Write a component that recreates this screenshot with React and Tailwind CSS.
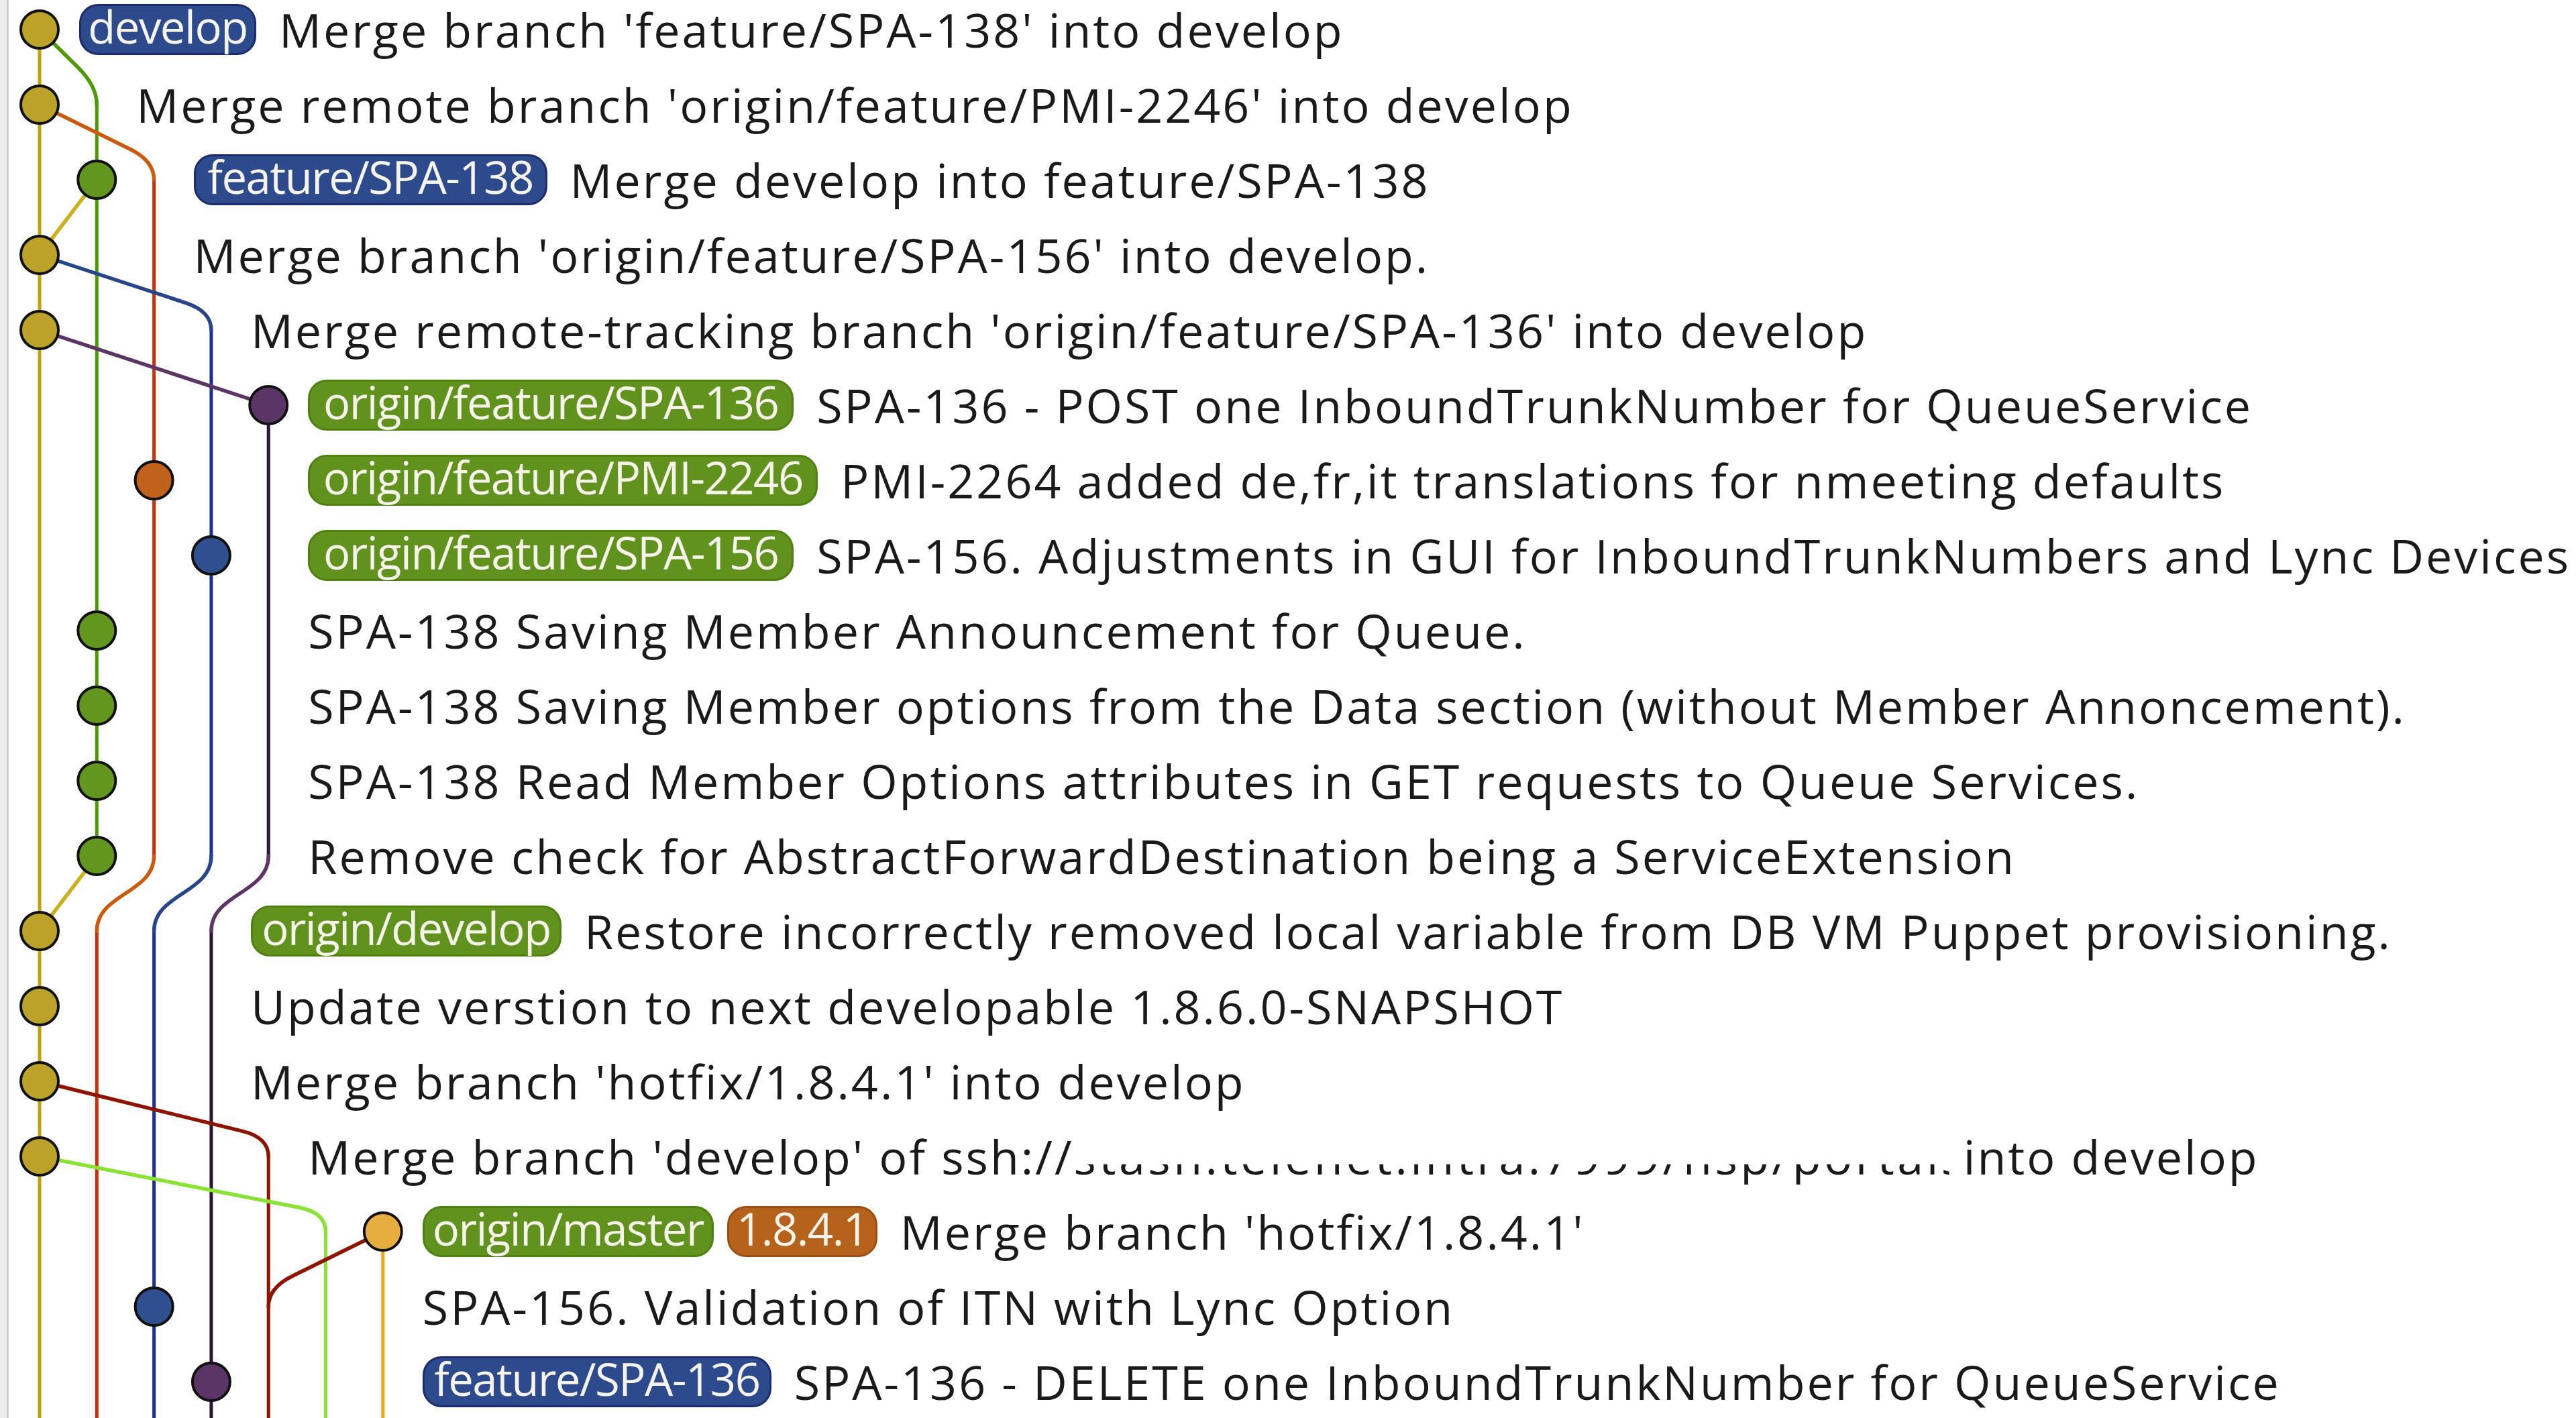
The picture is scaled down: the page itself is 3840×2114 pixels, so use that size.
import React from 'react'

// ── Graph geometry ───────────────────────────────────────────────────────────
const LANE = 85.3
const ROW = 112
const X = (k) => 46 + LANE * k
const Y = (i) => 44 + ROW * i
const BOTTOM = 2140

const C = {
  mustard: '#bf9f0a',
  mustardDot: '#bba229',
  merge: '#cbb020',
  green: '#4e9a06',
  greenDot: '#63961f',
  red: '#c6330a',
  orange: '#cc5a0c',
  orangeDot: '#c0621c',
  navy: '#1f2f8c',
  blue: '#26468a',
  blueDot: '#2f4f8f',
  plumDark: '#2b1838',
  plum: '#5c3566',
  plumDot: '#5b3466',
  maroon: '#8f1400',
  lime: '#8ae234',
  amber: '#f0a51a',
  amberDot: '#e8ad3f',
}

const vline = (k, a, b) => `M ${X(k)} ${a} L ${X(k)} ${b}`
// lane moves sideways between two rows, no commit on either end
const shift = (k1, k2, i) =>
  `M ${X(k1)} ${Y(i)} C ${X(k1)} ${Y(i) + 56} ${X(k2)} ${Y(i) + 56} ${X(k2)} ${Y(i + 1)}`
// from a commit dot out to a lane on the next row
const fork = (k1, i, k2) => {
  const x1 = X(k1), y1 = Y(i), x2 = X(k2), y2 = Y(i + 1)
  const yc = y2 - 28
  const dx = x2 - x1, dy = yc - y1
  const len = Math.hypot(dx, dy)
  const px = x2 - (dx * 40) / len
  const py = yc - (dy * 40) / len
  return `M ${x1} ${y1} L ${px} ${py} Q ${x2} ${yc} ${x2} ${y2}`
}
const straight = (k1, i1, k2, i2) => `M ${X(k1)} ${Y(i1)} L ${X(k2)} ${Y(i2)}`

const verticals = [
  [vline(0, Y(0), BOTTOM), C.mustard],
  [vline(1, Y(1), Y(11)), C.green],
  [vline(2, Y(2), Y(11)), C.red],
  [vline(1, Y(12), BOTTOM), C.red],
  [vline(3, Y(4), Y(11)), C.navy],
  [vline(2, Y(12), BOTTOM), C.navy],
  [vline(4, Y(5), Y(11)), C.plumDark],
  [vline(3, Y(12), BOTTOM), C.plumDark],
  [vline(4, Y(15), BOTTOM), C.maroon],
  [vline(5, Y(16), BOTTOM), C.lime],
  [vline(6, Y(16), BOTTOM), C.amber],
]

const curves = [
  [fork(0, 0, 1), C.green],
  [straight(1, 2, 0, 3), C.merge],
  [fork(0, 1, 2), C.orange],
  [fork(0, 3, 3), C.blue],
  [straight(0, 4, 4, 5), C.plum],
  [shift(2, 1, 11), C.orange],
  [shift(3, 2, 11), C.blue],
  [shift(4, 3, 11), C.plum],
  [straight(1, 11, 0, 12), C.merge],
  [fork(0, 14, 4), C.maroon],
  [fork(0, 15, 5), C.lime],
  [fork(6, 16, 4), C.maroon],
]

const dots = [
  [0, 0, C.mustardDot],
  [0, 1, C.mustardDot],
  [1, 2, C.greenDot],
  [0, 3, C.mustardDot],
  [0, 4, C.mustardDot],
  [4, 5, C.plumDot],
  [2, 6, C.orangeDot],
  [3, 7, C.blueDot],
  [1, 8, C.greenDot],
  [1, 9, C.greenDot],
  [1, 10, C.greenDot],
  [1, 11, C.greenDot],
  [0, 12, C.mustardDot],
  [0, 13, C.mustardDot],
  [0, 14, C.mustardDot],
  [0, 15, C.mustardDot],
  [6, 16, C.amberDot],
  [2, 17, C.blueDot],
  [3, 18, C.plumDot],
]

// ── Badges ───────────────────────────────────────────────────────────────────
const badgeTone = {
  local: 'bg-[#2c4a8c] border-[#1b2b6c]',
  remote: 'bg-[#62921e] border-[#507f12]',
  tag: 'bg-[#b5621c] border-[#9c4e12]',
}

const rows = [
  { n: 1, refs: [['develop', 'local', 'w-[264px]']], msg: "Merge branch 'feature/SPA-138' into develop" },
  { n: 2, msg: "Merge remote branch 'origin/feature/PMI-2246' into develop" },
  { n: 3, refs: [['feature/SPA-138', 'local', 'w-[527px]']], msg: 'Merge develop into feature/SPA-138' },
  { n: 3, msg: "Merge branch 'origin/feature/SPA-156' into develop." },
  { n: 4, msg: "Merge remote-tracking branch 'origin/feature/SPA-136' into develop" },
  { n: 5, refs: [['origin/feature/SPA-136', 'remote', 'w-[724px]']], msg: 'SPA-136 - POST one InboundTrunkNumber for QueueService' },
  { n: 5, refs: [['origin/feature/PMI-2246', 'remote', 'w-[760px]']], msg: 'PMI-2264 added de,fr,it translations for nmeeting defaults' },
  { n: 5, refs: [['origin/feature/SPA-156', 'remote', 'w-[724px]']], msg: 'SPA-156. Adjustments in GUI for InboundTrunkNumbers and Lync Devices' },
  { n: 5, msg: 'SPA-138 Saving Member Announcement for Queue.' },
  { n: 5, msg: 'SPA-138 Saving Member options from the Data section (without Member Annoncement).' },
  { n: 5, msg: 'SPA-138 Read Member Options attributes in GET requests to Queue Services.' },
  { n: 5, msg: 'Remove check for AbstractForwardDestination being a ServiceExtension' },
  { n: 4, refs: [['origin/develop', 'remote', 'w-[463px]']], msg: 'Restore incorrectly removed local variable from DB VM Puppet provisioning.' },
  { n: 4, msg: 'Update verstion to next developable 1.8.6.0-SNAPSHOT' },
  { n: 4, msg: "Merge branch 'hotfix/1.8.4.1' into develop" },
  {
    n: 5,
    msg: (
      <>
        Merge branch 'develop' of ssh://
        <span className="inline-block w-[1305px] whitespace-nowrap tracking-[4.5px] [clip-path:inset(64%_0_0_0)]">
          stash.telenet.intra:7999/nsp/portals
        </span>{' '}
        into develop
      </>
    ),
  },
  {
    n: 7,
    refs: [
      ['origin/master', 'remote', 'w-[434px]'],
      ['1.8.4.1', 'tag', 'w-[224px]'],
    ],
    msg: "Merge branch 'hotfix/1.8.4.1'",
  },
  { n: 7, msg: 'SPA-156. Validation of ITN with Lync Option' },
  { n: 7, refs: [['feature/SPA-136', 'local', 'w-[520px]']], msg: 'SPA-136 - DELETE one InboundTrunkNumber for QueueService' },
]

function Badge({ label, tone, width }) {
  return (
    <span
      className={`inline-flex items-center justify-center h-[76px] pb-[10px] rounded-[28px] border-[3px] shrink-0 ${badgeTone[tone]} ${width}`}
    >
      <span className="text-[67px] leading-none tracking-[-1.5px] text-[#f5f3ea]">{label}</span>
    </span>
  )
}

function Graph() {
  return (
    <svg className="absolute left-0 top-0" width="700" height="2114" viewBox="0 0 700 2114">
      {verticals.map(([d, c], i) => (
        <path key={`v${i}`} d={d} stroke={c} strokeWidth="5" fill="none" />
      ))}
      {curves.map(([d, c], i) => (
        <path key={`c${i}`} d={d} stroke={c} strokeWidth="5.5" fill="none" strokeLinecap="round" />
      ))}
      {dots.map(([k, i, fill]) => (
        <circle key={`d${i}`} cx={X(k)} cy={Y(i)} r="28" fill={fill} stroke="#111111" strokeWidth="4" />
      ))}
    </svg>
  )
}

export default function App() {
  return (
    <div className="w-[3840px] h-[2114px] overflow-hidden bg-white flex font-['Open_Sans',sans-serif]">
      {/* left pane edge */}
      <div className="w-[13px] shrink-0 bg-[#ececec] border-r-[3px] border-[#cdcdcd]" />

      <div className="relative flex-1 overflow-hidden">
        <Graph />

        <div className="relative flex flex-col">
          {rows.map((r, i) => (
            <div
              key={i}
              className={`shrink-0 flex items-center whitespace-nowrap text-[70px] leading-[84px] tracking-[3px] text-[#1a1a1a] ${
                i === 0 ? 'h-[100px] pb-[12px]' : 'h-[112px]'
              }`}
              style={{ paddingLeft: 105 + LANE * (r.n - 1) }}
            >
              {r.refs && (
                <div className="flex items-center gap-[20px] mr-[34px]">
                  {r.refs.map(([label, tone, width]) => (
                    <Badge key={label} label={label} tone={tone} width={width} />
                  ))}
                </div>
              )}
              <span>{r.msg}</span>
            </div>
          ))}
        </div>
      </div>
    </div>
  )
}
